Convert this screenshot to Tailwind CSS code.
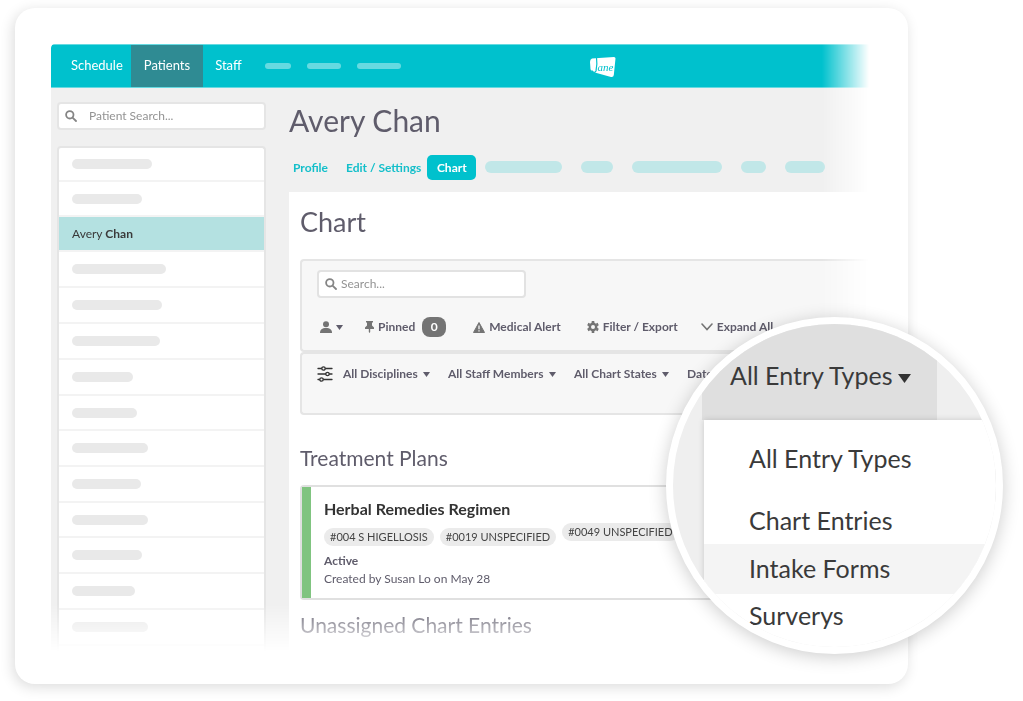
<!DOCTYPE html>
<html lang="en">
  <head>
    <meta charset="UTF-8" />
    <meta name="viewport" content="width=device-width, initial-scale=1.0" />
    <title>Jane - Patient Chart</title>
    <script src="https://cdn.jsdelivr.net/npm/@tailwindcss/browser@4"></script>
  </head>
  <body class="bg-white font-['Lato',sans-serif] text-[#5f5c6b]">
    <div class="pt-2 pb-4 pl-[15px] pr-[115px]">
      <div class="relative rounded-[20px] bg-white p-9 pb-7 shadow-[-2px_3px_14px_rgba(0,0,0,0.14)]">
        <!-- app window, fades out to the right and the bottom -->
        <div class="[mask-image:linear-gradient(to_left,transparent_3px,black_50px)]">
          <div class="h-[612px] overflow-hidden rounded-tl bg-[#f0f0f0] [mask-image:linear-gradient(to_top,transparent_4px,black_52px)]">
            <header class="relative flex h-11 items-center border-y border-[#66dae1] bg-[#00c1cd] text-[13px] text-white">
              <nav class="flex h-full items-center">
                <a href="#" class="pl-5 pr-2">Schedule</a>
                <a href="#" class="flex h-full items-center bg-[#2f8b93] px-[13px]">Patients</a>
                <a href="#" class="px-3">Staff</a>
              </nav>
              <div class="ml-[11px] flex gap-4">
                <div class="h-1.5 w-[26px] rounded-full bg-[#66dae1]"></div>
                <div class="h-1.5 w-[34px] rounded-full bg-[#66dae1]"></div>
                <div class="h-1.5 w-11 rounded-full bg-[#66dae1]"></div>
              </div>
              <svg class="absolute left-[538px] top-[11px] h-[22px] w-[28px]" viewBox="0 0 28 22" role="img" aria-label="Jane">
                <path d="M3 2.500 Q1 3 1 6 L1.500 13 Q1.500 15 4 16 L22 21 Q24.500 21.500 24.800 19 L26.500 2.500 Q26.500 1 25 1 L10 2 Z" fill="#fff" />
                <path d="M7.500 1.500 Q8.500 8 7 15 Q5.500 18 2.500 14.500" fill="none" stroke="#00c1cd" stroke-width="1.200" />
                <text x="8.500" y="14.500" font-family="Liberation Serif, serif" font-size="11" font-style="italic" fill="#00c1cd">ane</text>
              </svg>
            </header>

            <div class="flex">
              <aside class="w-[215px] shrink-0 pl-1.5 pt-[14px]">
                <div class="flex h-7 items-center rounded border-2 border-[#e5e5e5] bg-white pl-1.5">
                  <svg class="size-3" viewBox="0 0 12 12" fill="none" stroke="#858585" stroke-width="1.8" stroke-linecap="round"><circle cx="4.800" cy="4.800" r="3.700" /><path d="M7.800 7.800 11 11" /></svg>
                  <input type="text" aria-label="Patient search" placeholder="Patient Search..." class="ml-3 min-w-0 flex-1 text-xs placeholder:text-[#939393] outline-none" />
                </div>
                <ul class="mt-4 rounded-t border-x-2 border-t-2 border-[#e5e5e5] bg-white text-xs text-[#3a3a3a] *:flex *:items-center *:border-b-2 *:border-[#f3f3f3] *:pl-[13px]">
                  <li class="h-[34px]"><div class="h-2.5 w-20 rounded-full bg-[#e9e9e9]"></div></li>
                  <li class="h-[35px]"><div class="h-2.5 w-[70px] rounded-full bg-[#e9e9e9]"></div></li>
                  <li class="h-[35px] bg-[#b4e1e1]"><a href="#">Avery <b>Chan</b></a></li>
                  <li class="h-9"><div class="h-2.5 w-[94px] rounded-full bg-[#e9e9e9]"></div></li>
                  <li class="h-9"><div class="h-2.5 w-[90px] rounded-full bg-[#e9e9e9]"></div></li>
                  <li class="h-9"><div class="h-2.5 w-[88px] rounded-full bg-[#e9e9e9]"></div></li>
                  <li class="h-9"><div class="h-2.5 w-[61px] rounded-full bg-[#e9e9e9]"></div></li>
                  <li class="h-[35px]"><div class="h-2.5 w-[65px] rounded-full bg-[#e9e9e9]"></div></li>
                  <li class="h-9"><div class="h-2.5 w-[76px] rounded-full bg-[#e9e9e9]"></div></li>
                  <li class="h-9"><div class="h-2.5 w-[69px] rounded-full bg-[#e9e9e9]"></div></li>
                  <li class="h-[35px]"><div class="h-2.5 w-[76px] rounded-full bg-[#e9e9e9]"></div></li>
                  <li class="h-9"><div class="h-2.5 w-[70px] rounded-full bg-[#e9e9e9]"></div></li>
                  <li class="h-9"><div class="h-2.5 w-[63px] rounded-full bg-[#e9e9e9]"></div></li>
                  <li class="h-9"><div class="h-2.5 w-[76px] rounded-full bg-[#e9e9e9]"></div></li>
                  <li class="h-9"></li>
                </ul>
              </aside>

              <main class="ml-[23px] min-w-0 flex-1">
                <h1 class="pt-3 text-[30px] leading-10">Avery Chan</h1>
                <div class="mt-[15px] flex h-[25px] items-center text-[12px] font-bold text-[#14bfca]">
                  <a href="#" class="ml-1">Profile</a>
                  <a href="#" class="ml-[18px]">Edit / Settings</a>
                  <a href="#" class="ml-1.5 flex h-full w-[49px] items-center justify-center rounded-[5px] bg-[#00c1cd] text-white">Chart</a>
                  <div class="-mt-0.5 ml-[9px] flex gap-[19px]">
                    <div class="h-3 w-[77px] rounded-full bg-[#c1e7e8]"></div>
                    <div class="h-3 w-8 rounded-full bg-[#c1e7e8]"></div>
                    <div class="h-3 w-[90px] rounded-full bg-[#c1e7e8]"></div>
                    <div class="h-3 w-[25px] rounded-full bg-[#c1e7e8]"></div>
                    <div class="h-3 w-10 rounded-full bg-[#c1e7e8]"></div>
                  </div>
                </div>

                <section class="mt-3 bg-white pb-10 pl-[11px] pt-3">
                  <h2 class="text-[27px] leading-9">Chart</h2>

                  <div class="mt-[19px] h-[93px] rounded-l border-y-2 border-l-2 border-[#e5e5e5] bg-[#f7f7f7] pl-[15px] pt-[9px]">
                    <div class="flex h-7 w-[209px] items-center rounded border-2 border-[#e2e2e2] bg-white pl-1.5">
                      <svg class="size-3" viewBox="0 0 12 12" fill="none" stroke="#858585" stroke-width="1.8" stroke-linecap="round"><circle cx="4.800" cy="4.800" r="3.700" /><path d="M7.800 7.800 11 11" /></svg>
                      <input type="text" aria-label="Search chart" placeholder="Search..." class="ml-1 min-w-0 flex-1 text-xs placeholder:text-[#939393] outline-none" />
                    </div>
                    <div class="mt-[19px] flex h-5 items-center whitespace-nowrap text-[12px] font-bold">
                      <button class="ml-[3px] flex items-center gap-1" aria-label="Author">
                        <svg class="size-3" viewBox="0 0 12 12" fill="#747474"><circle cx="6" cy="3.200" r="3" /><path d="M0 12c0-3.500 2-5 6-5s6 1.500 6 5z" /></svg>
                        <svg class="h-[5px] w-[7px]" viewBox="0 0 7 5" fill="#5f5c6b"><path d="M0 0h7L3.500 5z" /></svg>
                      </button>
                      <button class="ml-[22px] flex items-center">
                        <svg class="h-3 w-[9px]" viewBox="0 0 9 12" fill="#747474"><path d="M1 0h7v1.500H7V4.500L9 6.500V8H5.200V11L4.500 12 3.800 11V8H0V6.500L2 4.500V1.500H1z" /></svg>
                        <span class="ml-1">Pinned</span>
                        <span class="ml-[7px] flex h-5 w-6 items-center justify-center rounded-lg bg-[#747474] text-white">0</span>
                      </button>
                      <button class="ml-[27px] flex items-center gap-1">
                        <svg class="h-[11px] w-3" viewBox="0 0 12 11"><path d="M6 .5 11.500 10.500H.5z" fill="#747474" stroke="#747474" stroke-linejoin="round" /><path d="M6 3.500v3.700M6 8.300v1.300" stroke="#f7f7f7" stroke-width="1.300" /></svg>
                        Medical Alert
                      </button>
                      <button class="ml-[26px] flex items-center gap-1">
                        <svg class="size-3" viewBox="0 0 12 12" fill="none" stroke="#747474"><circle cx="6" cy="6" r="3.200" stroke-width="2.400" /><path d="M6 0v2M6 10v2M.8 3l1.800 1M9.400 8l1.800 1M.8 9l1.800-1M9.400 4l1.800-1" stroke-width="2.600" /></svg>
                        Filter / Export
                      </button>
                      <button class="ml-[23px] flex items-center gap-1">
                        <svg class="h-2 w-3" viewBox="0 0 12 8" fill="none" stroke="#747474" stroke-width="1.600" stroke-linecap="round"><path d="M1 1l5 5.500L11 1" /></svg>
                        Expand All
                      </button>
                    </div>
                  </div>

                  <div class="flex h-[63px] items-start rounded-l border-y-2 border-l-2 border-[#e5e5e5] bg-[#f7f7f7] pl-[15px] pt-3 text-[12px] font-bold">
                    <svg class="h-4 w-4 shrink-0" viewBox="0 0 16 16" fill="#f7f7f7" stroke="#333" stroke-width="1.300" stroke-linecap="round"><path d="M1 2.500h14M1 8h14M1 13.500h14" /><circle cx="6.500" cy="2.500" r="1.700" /><circle cx="10.500" cy="8" r="1.700" /><circle cx="4.500" cy="13.500" r="1.700" /></svg>
                    <div class="ml-[10px] flex h-4 items-center gap-[18px] whitespace-nowrap">
                      <label class="flex items-center gap-[5px]"><select aria-label="Disciplines" class="appearance-none"><option>All Disciplines</option></select><svg class="h-[5px] w-[7px]" viewBox="0 0 7 5" fill="#5f5c6b"><path d="M0 0h7L3.500 5z" /></svg></label>
                      <label class="flex items-center gap-[5px]"><select aria-label="Staff members" class="appearance-none"><option>All Staff Members</option></select><svg class="h-[5px] w-[7px]" viewBox="0 0 7 5" fill="#5f5c6b"><path d="M0 0h7L3.500 5z" /></svg></label>
                      <label class="flex items-center gap-[5px]"><select aria-label="Chart states" class="appearance-none"><option>All Chart States</option></select><svg class="h-[5px] w-[7px]" viewBox="0 0 7 5" fill="#5f5c6b"><path d="M0 0h7L3.500 5z" /></svg></label>
                      <select aria-label="Dates" class="appearance-none"><option>Dates</option></select>
                    </div>
                  </div>

                  <h3 class="mt-[29px] text-[21px] leading-7">Treatment Plans</h3>
                  <article class="mt-[13px] flex rounded-l border-y-2 border-l-2 border-[#e0e0e0]">
                    <div class="w-[9px] bg-[#80c480]"></div>
                    <div class="h-[111px] pl-[13px] pt-3 text-xs">
                      <h4 class="text-base font-bold leading-5 text-[#333]">Herbal Remedies Regimen</h4>
                      <div class="mt-1 flex gap-1.5 whitespace-nowrap text-[11px] text-[#444] *:flex *:h-[18px] *:items-center *:rounded-full *:bg-[#ebebeb] *:px-1.5">
                        <span class="mt-[5px]">#004 S HIGELLOSIS</span>
                        <span class="mt-[5px]">#0019 UNSPECIFIED</span>
                        <span>#0049 UNSPECIFIED</span>
                      </div>
                      <p class="mt-1.5 font-bold leading-[18px]">Active</p>
                      <p class="leading-[18px]">Created by Susan Lo on May 28</p>
                    </div>
                  </article>
                  <h3 class="mt-[11px] text-[21px] leading-7">Unassigned Chart Entries</h3>
                </section>
              </main>
            </div>
          </div>
        </div>

        <!-- magnified entry type menu -->
        <div class="absolute -right-[95px] bottom-[30px] size-[337px] overflow-hidden rounded-full border-[7px] border-white bg-[#efefef] text-[25px] text-[#3a3a3a] shadow-[0_3px_18px_rgba(0,0,0,0.2)]">
          <button class="ml-[29px] flex h-24 w-[235px] items-center gap-1.5 bg-[#dfdfdf] pl-7 pt-2">
            All Entry Types
            <svg class="mt-1 h-[9px] w-[13px]" viewBox="0 0 13 9" fill="#333"><path d="M0 0h13L6.500 9z" /></svg>
          </button>
          <div class="ml-[31px] flex h-full flex-col bg-white shadow-[0_0_6px_rgba(0,0,0,0.16)] *:pl-[45px] *:text-left">
            <button class="h-[77px]">All Entry Types</button>
            <button class="h-[47px]">Chart Entries</button>
            <button class="h-[50px] bg-[#f4f4f4]">Intake Forms</button>
            <button class="h-[44px]">Surverys</button>
          </div>
        </div>
      </div>
    </div>
  </body>
</html>
